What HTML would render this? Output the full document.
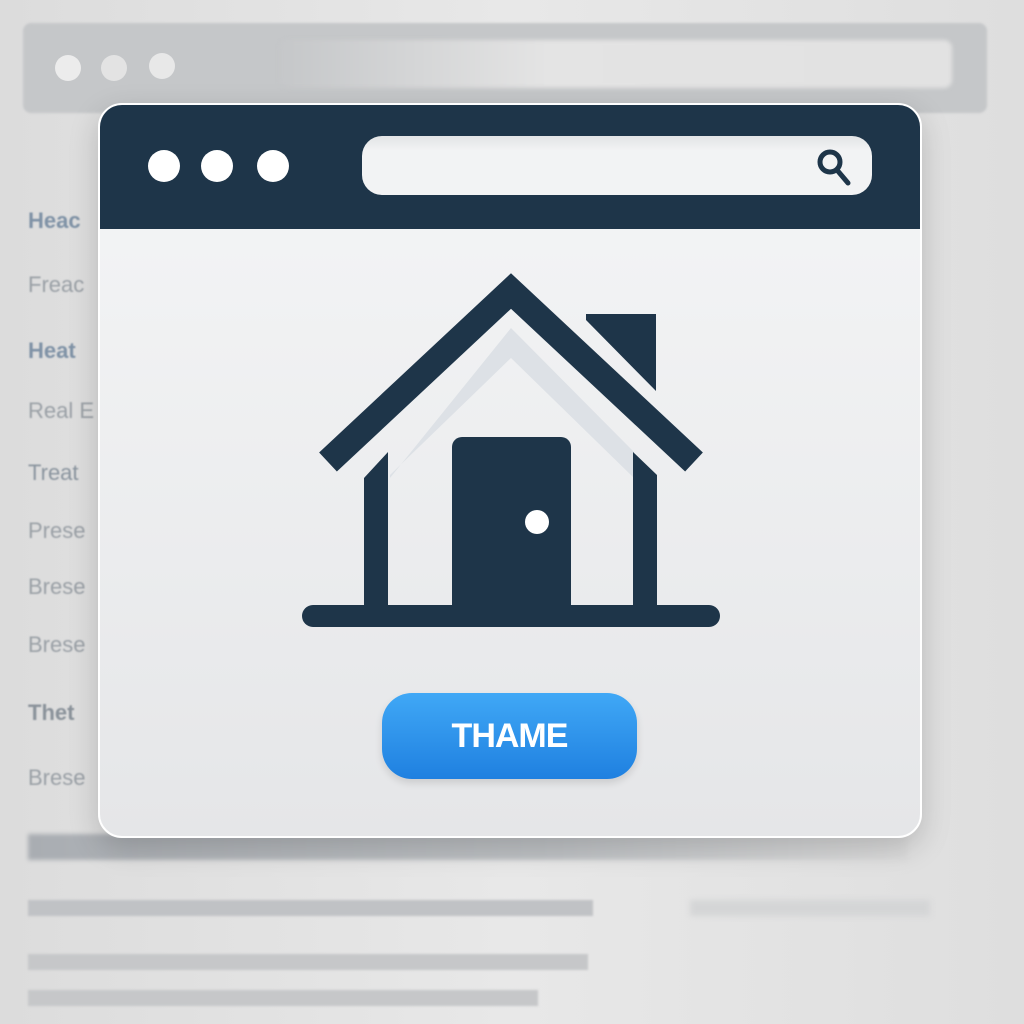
<!DOCTYPE html>
<html><head><meta charset="utf-8"><style>
body{margin:0;width:1024px;height:1024px;background:#e4e4e4;overflow:hidden;position:relative;font-family:"Liberation Sans",sans-serif}
.a{position:absolute}
.t{position:absolute;left:28px;font-size:22px;color:#9aa0a6;filter:blur(.9px)}
</style></head><body>
<div class="a" style="left:0;top:0;width:1024px;height:1024px;background:linear-gradient(90deg,#dcdcdc,#e8e8e8 50%,#dedede)"></div>
<div class="a" style="left:23px;top:23px;width:964px;height:90px;background:#c5c7c9;border-radius:8px;filter:blur(1px)"></div>
<div class="a" style="left:55px;top:55px;width:26px;height:26px;border-radius:50%;background:#ececec"></div>
<div class="a" style="left:101px;top:55px;width:26px;height:26px;border-radius:50%;background:#e3e3e3"></div>
<div class="a" style="left:149px;top:53px;width:26px;height:26px;border-radius:50%;background:#e8e8e8"></div>
<div class="a" style="left:280px;top:40px;width:672px;height:48px;border-radius:8px;background:linear-gradient(90deg,#c5c7c9,#e4e4e4 40%,#e2e2e2);filter:blur(2px)"></div>
<div class="t" style="top:208px;font-weight:bold;color:#7f92a6">Heac</div>
<div class="t" style="top:272px">Freac</div>
<div class="t" style="top:338px;font-weight:bold;color:#7f92a6">Heat</div>
<div class="t" style="top:398px">Real E</div>
<div class="t" style="top:460px;color:#8a949e">Treat</div>
<div class="t" style="top:518px">Prese</div>
<div class="t" style="top:574px">Brese</div>
<div class="t" style="top:632px">Brese</div>
<div class="t" style="top:700px;font-weight:bold;color:#8a929a">Thet</div>
<div class="t" style="top:765px">Brese</div>
<div class="a" style="left:28px;top:834px;width:880px;height:26px;background:linear-gradient(90deg,#a9adb2,#c0c3c6 60%,#dcdcdc);filter:blur(2px)"></div>
<div class="a" style="left:28px;top:900px;width:565px;height:16px;background:#c0c2c5;filter:blur(1px)"></div>
<div class="a" style="left:690px;top:900px;width:240px;height:16px;background:#d4d5d6;filter:blur(3px)"></div>
<div class="a" style="left:28px;top:954px;width:560px;height:16px;background:#c6c7c9;filter:blur(1px)"></div>
<div class="a" style="left:28px;top:990px;width:510px;height:16px;background:#c6c7c9;filter:blur(1px)"></div>

<div class="a" style="left:98px;top:103px;width:824px;height:735px;border-radius:24px;background:linear-gradient(180deg,#f5f6f7,#e5e6e8);box-shadow:0 10px 30px rgba(0,0,0,.18);border:2px solid #fff;box-sizing:border-box;overflow:hidden">
<div class="a" style="left:0;top:0;width:824px;height:124px;background:#1e3549"></div>
</div>
<div class="a" style="left:148px;top:150px;width:32px;height:32px;border-radius:50%;background:#fff"></div>
<div class="a" style="left:201px;top:150px;width:32px;height:32px;border-radius:50%;background:#fff"></div>
<div class="a" style="left:257px;top:150px;width:32px;height:32px;border-radius:50%;background:#fff"></div>
<div class="a" style="left:362px;top:136px;width:510px;height:59px;border-radius:20px;background:linear-gradient(180deg,#e2e4e6,#f2f3f4 25%,#f2f3f4)"></div>
<svg class="a" style="left:0;top:0" width="1024" height="1024">
<circle cx="830" cy="162" r="10" fill="none" stroke="#1e3549" stroke-width="5"/>
<line x1="837" y1="170" x2="848" y2="183" stroke="#1e3549" stroke-width="5" stroke-linecap="round"/>
<polygon points="390,478 511,328 634,452 634,478 511,358 390,475" fill="#dde1e6"/>
<polygon points="586,314 656,314 656,391 586,320" fill="#1e3549"/>
<polyline points="328,462 511,291 694,462" fill="none" stroke="#1e3549" stroke-width="26" stroke-linecap="butt" stroke-linejoin="miter"/>
<polygon points="364,478 388,452 388,610 364,610" fill="#1e3549"/>
<polygon points="633,452 657,475 657,610 633,610" fill="#1e3549"/>
<rect x="452" y="437" width="119" height="180" rx="10" fill="#1e3549"/>
<circle cx="537" cy="522" r="12" fill="#fff"/>
<line x1="313" y1="616" x2="709" y2="616" stroke="#1e3549" stroke-width="22" stroke-linecap="round"/>
</svg>
<div class="a" style="left:382px;top:693px;width:255px;height:86px;border-radius:30px;background:linear-gradient(180deg,#40a8f6,#1f80e0);box-shadow:0 4px 8px rgba(0,0,0,.12);color:#fff;font-size:34px;font-weight:bold;line-height:86px;text-align:center;letter-spacing:-1px">THAME</div>
</body></html>
